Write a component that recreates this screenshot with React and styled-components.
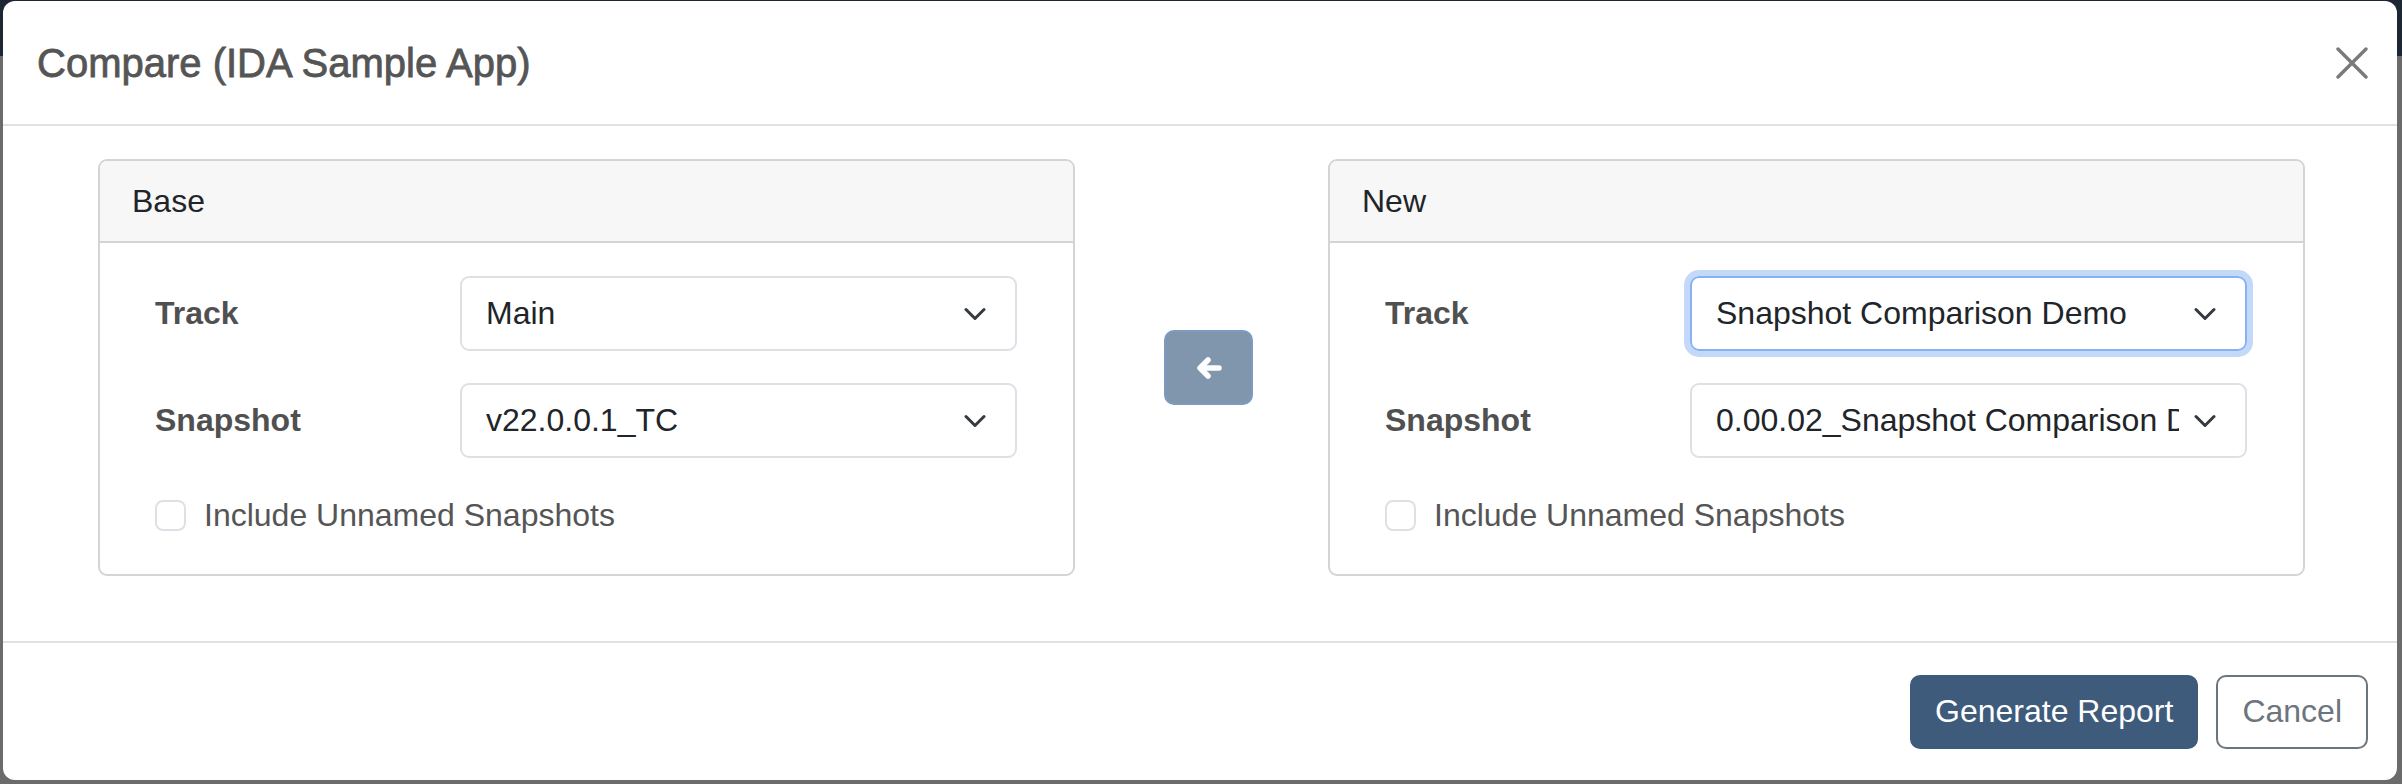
import React from 'react'
import styled, { createGlobalStyle } from 'styled-components'

const GlobalStyle = createGlobalStyle`
  html, body {
    margin: 0;
    padding: 0;
  }
  body {
    width: 2402px;
    height: 784px;
    overflow: hidden;
    background: linear-gradient(to bottom, #1d2733 0, #1d2733 56px, #6b6b6b 56px);
    font-family: "Liberation Sans", Arial, sans-serif;
  }
`

const CloseIcon = () => (
  <svg width="32" height="32" viewBox="0 0 32 32">
    <path d="M2 2 L30 30 M30 2 L2 30" stroke="#7a7a7a" strokeWidth="3.4" strokeLinecap="round" />
  </svg>
)

const ArrowLeft = () => (
  <svg width="28" height="28" viewBox="0 0 28 28">
    <path d="M24 14 H6 M13 6 L5 14 L13 22" fill="none" stroke="#fff" strokeWidth="5.5" strokeLinecap="round" strokeLinejoin="round" />
  </svg>
)

const Chevron = () => (
  <svg width="22" height="13" viewBox="0 0 22 13">
    <path d="M2 2 L11 11 L20 2" fill="none" stroke="#343a40" strokeWidth="3" strokeLinecap="round" strokeLinejoin="round" />
  </svg>
)

const SelectBox = ({ value, focused }) => (
  <Select $focused={focused}>
    <SelectValue>{value}</SelectValue>
    <Caret><Chevron /></Caret>
  </Select>
)

const Panel = ({ title, track, snapshot, focused }) => (
  <Card>
    <CardHeader>{title}</CardHeader>
    <CardBody>
      <FieldRow>
        <Label>Track</Label>
        <SelectBox value={track} focused={focused} />
      </FieldRow>
      <FieldRow>
        <Label>Snapshot</Label>
        <SelectBox value={snapshot} />
      </FieldRow>
      <CheckRow>
        <Checkbox />
        <span>Include Unnamed Snapshots</span>
      </CheckRow>
    </CardBody>
  </Card>
)

const App = () => {
  return (
    <>
      <GlobalStyle />
      <Page>
        <Modal>
          <Header>
            <Title>Compare (IDA Sample App)</Title>
            <CloseButton aria-label="Close"><CloseIcon /></CloseButton>
          </Header>
          <Body>
            <Panel title="Base" track="Main" snapshot="v22.0.0.1_TC" />
            <SwapCell>
              <SwapButton><ArrowLeft /></SwapButton>
            </SwapCell>
            <Panel
              title="New"
              track="Snapshot Comparison Demo"
              snapshot="0.00.02_Snapshot Comparison Demo"
              focused
            />
          </Body>
          <Footer>
            <PrimaryButton>Generate Report</PrimaryButton>
            <OutlineButton>Cancel</OutlineButton>
          </Footer>
        </Modal>
      </Page>
    </>
  )
}

const Page = styled.div`
  padding: 1px 5px 0 3px;
`

const Modal = styled.div`
  background: #fff;
  border-radius: 12px;
  height: 779px;
  display: flex;
  flex-direction: column;
  overflow: hidden;
`

const Header = styled.div`
  height: 123px;
  border-bottom: 2px solid #dee2e6;
  display: flex;
  align-items: center;
  justify-content: space-between;
  padding: 0 29px 0 34px;
`

const Title = styled.h5`
  margin: 0;
  font-size: 40px;
  line-height: 60px;
  font-weight: 400;
  color: #555;
  -webkit-text-stroke: 0.8px #555;
`

const CloseButton = styled.button`
  border: 0;
  background: none;
  padding: 0;
  display: flex;
  width: 32px;
  height: 32px;
`

const Body = styled.div`
  flex: 1;
  display: grid;
  grid-template-columns: minmax(0, 1fr) 253px minmax(0, 1fr);
  align-content: start;
  align-items: stretch;
  padding: 33px 92px 0 95px;
`

const Card = styled.div`
  border: 2px solid #d4d4d4;
  border-radius: 9px;
  overflow: hidden;
  min-width: 0;
`

const CardHeader = styled.div`
  background: #f7f7f7;
  border-bottom: 2px solid #d4d4d4;
  height: 80px;
  line-height: 80px;
  padding: 0 32px;
  font-size: 32px;
  color: #212529;
`

const CardBody = styled.div`
  padding: 33px 56px 35px 55px;
  display: flex;
  flex-direction: column;
`

const FieldRow = styled.div`
  display: grid;
  grid-template-columns: 305px minmax(0, 1fr);
  align-items: center;
  margin-bottom: 32px;
`

const Label = styled.div`
  font-size: 32px;
  font-weight: 700;
  color: #505050;
`

const Select = styled.div`
  position: relative;
  min-width: 0;
  height: 75px;
  box-sizing: border-box;
  border: 2px solid ${p => (p.$focused ? '#86b2f4' : '#dde1e6')};
  border-radius: 9px;
  box-shadow: ${p => (p.$focused ? '0 0 0 6px #c4d9fa' : 'none')};
  display: flex;
  align-items: center;
  padding: 0 66px 0 24px;
  font-size: 32px;
  color: #212529;
`

const SelectValue = styled.div`
  white-space: nowrap;
  overflow: hidden;
  min-width: 0;
`

const Caret = styled.span`
  position: absolute;
  right: 29px;
  top: 50%;
  transform: translateY(-50%);
  display: flex;
`

const CheckRow = styled.label`
  display: flex;
  align-items: center;
  gap: 18px;
  height: 48px;
  margin-top: 1px;
  font-size: 32px;
  color: #555;
`

const Checkbox = styled.span`
  width: 31px;
  height: 31px;
  box-sizing: border-box;
  border: 2px solid #dde1e6;
  border-radius: 8px;
  background: #fff;
`

const SwapCell = styled.div`
  display: flex;
  align-items: center;
  justify-content: center;
  padding-left: 14px;
`

const SwapButton = styled.button`
  width: 89px;
  height: 75px;
  background: #8096ad;
  border: 2px solid #7d9bc0;
  border-radius: 10px;
  display: flex;
  align-items: center;
  justify-content: center;
  padding: 0;
`

const Footer = styled.div`
  height: 139px;
  box-sizing: border-box;
  border-top: 2px solid #dee2e6;
  display: flex;
  align-items: center;
  justify-content: flex-end;
  gap: 18px;
  padding: 2px 29px 2px 0;
`

const PrimaryButton = styled.button`
  height: 74px;
  padding: 0 23px;
  font-family: "Liberation Sans", Arial, sans-serif;
  font-size: 32px;
  color: #fff;
  background: #3e5b7c;
  border: 2px solid #3e5b7c;
  border-radius: 10px;
`

const OutlineButton = styled(PrimaryButton)`
  padding: 0 24px;
  color: #6c757d;
  background: #fff;
  border-color: #6c757d;
`

export default App
